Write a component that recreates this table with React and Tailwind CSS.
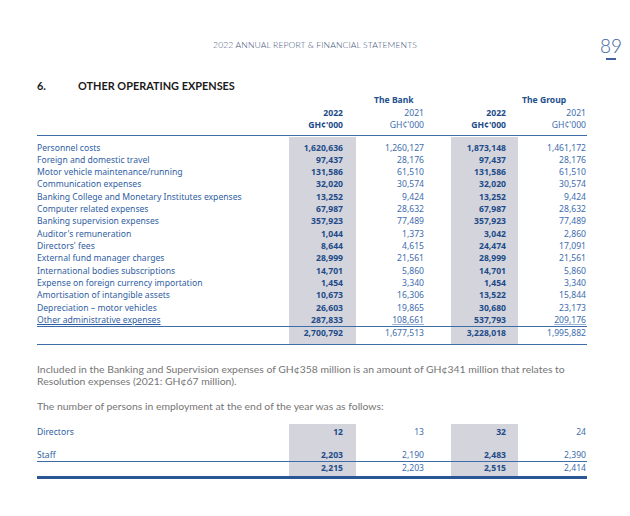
import React from 'react';

const ROWS = [
  ['Personnel costs', '1,620,636', '1,260,127', '1,873,148', '1,461,172'],
  ['Foreign and domestic travel', '97,437', '28,176', '97,437', '28,176'],
  ['Motor vehicle maintenance/running', '131,586', '61,510', '131,586', '61,510'],
  ['Communication expenses', '32,020', '30,574', '32,020', '30,574'],
  ['Banking College and Monetary Institutes expenses', '13,252', '9,424', '13,252', '9,424'],
  ['Computer related expenses', '67,987', '28,632', '67,987', '28,632'],
  ['Banking supervision expenses', '357,923', '77,489', '357,923', '77,489'],
  ["Auditor's remuneration", '1,044', '1,373', '3,042', '2,860'],
  ["Directors' fees", '8,644', '4,615', '24,474', '17,091'],
  ['External fund manager charges', '28,999', '21,561', '28,999', '21,561'],
  ['International bodies subscriptions', '14,701', '5,860', '14,701', '5,860'],
  ['Expense on foreign currency importation', '1,454', '3,340', '1,454', '3,340'],
  ['Amortisation of intangible assets', '10,673', '16,306', '13,522', '15,844'],
  ['Depreciation – motor vehicles', '26,603', '19,865', '30,680', '23,173'],
  ['Other administrative expenses', '287,833', '108,661', '537,793', '209,176'],
];

const GRID = 'grid grid-cols-[252px_67px_95px_67px_69px]';
const GRAY = 'bg-[#d4d4dc]';

function Row({ cells, underline, lead = 'leading-[12.33px]' }) {
  const [label, a, b, c, d] = cells;
  return (
    <div className={`${GRID} ${lead}`}>
      <div className="text-[#2f60a2]">
        <span className={underline ? 'underline decoration-[#2f60a2] underline-offset-[1px]' : ''}>{label}</span>
      </div>
      <div className={`${GRAY} text-right pr-[13px] font-bold text-[#204b88]`}>{a}</div>
      <div className="text-right pr-[27px] text-[#3d6cad]">
        <span className={underline ? 'underline decoration-[#9bb3d4] underline-offset-[1px]' : ''}>{b}</span>
      </div>
      <div className={`${GRAY} text-right pr-[12px] font-bold text-[#204b88]`}>{c}</div>
      <div className="text-right pr-[1px] text-[#3d6cad]">
        <span className={underline ? 'underline decoration-[#9bb3d4] underline-offset-[1px]' : ''}>{d}</span>
      </div>
    </div>
  );
}

function Spacer({ h }) {
  return (
    <div className={GRID}>
      <div className={h} />
      <div className={GRAY} />
      <div />
      <div className={GRAY} />
      <div />
    </div>
  );
}

export default function App() {
  return (
    <div className="w-[630px] h-[516px] bg-white overflow-hidden font-['Noto_Sans',sans-serif]">
      {/* page header */}
      <div className="h-[78px] pt-[36px] grid grid-cols-[1fr_auto_1fr] items-start">
        <div />
        <div className="mt-[2px] font-['Lato',sans-serif] font-light text-[8.6px] leading-[14px] text-[#44557a] tracking-[0.1px]">
          2022 ANNUAL REPORT &amp; FINANCIAL STATEMENTS
        </div>
        <div className="justify-self-end mr-[8px] flex flex-col items-center">
          <span className="font-['Lato',sans-serif] font-light text-[19px] leading-[19px] text-[#3e63a0]">89</span>
          <span className="mt-[3px] w-[10px] h-[1.5px] bg-[#3e63a0]" />
        </div>
      </div>

      <div className="ml-[37px] w-[550px]">
        {/* section title */}
        <div className="flex font-['Lato',sans-serif] font-bold text-[10.9px] leading-[16px] text-[#1a1a1a]">
          <span className="w-[41px]">6.</span>
          <span>OTHER OPERATING EXPENSES</span>
        </div>

        {/* column headers */}
        <div className="text-[8.6px] pb-[3px] border-b border-[#3d6ca6]">
          <div className={`${GRID} leading-[12.5px]`}>
            <div />
            <div />
            <div className="pl-[18px] font-bold text-[#24508d]">The Bank</div>
            <div />
            <div className="pl-[4px] font-bold text-[#24508d]">The Group</div>
          </div>
          <div className={`${GRID} leading-[12.5px]`}>
            <div />
            <div className="text-right pr-[13px] font-bold text-[#204b88]">2022</div>
            <div className="text-right pr-[27px] text-[#3d6cad]">2021</div>
            <div className="text-right pr-[12px] font-bold text-[#204b88]">2022</div>
            <div className="text-right pr-[1px] text-[#3d6cad]">2021</div>
          </div>
          <div className={`${GRID} leading-[12.5px]`}>
            <div />
            <div className="text-right pr-[13px] font-bold text-[#204b88]">GH¢'000</div>
            <div className="text-right pr-[27px] text-[#3d6cad]">GH¢'000</div>
            <div className="text-right pr-[12px] font-bold text-[#204b88]">GH¢'000</div>
            <div className="text-right pr-[1px] text-[#3d6cad]">GH¢'000</div>
          </div>
        </div>

        {/* body */}
        <div className="mt-[1.5px] text-[8.6px] border-b-[1.5px] border-[#3d6ca6]">
          <Spacer h="h-[4.5px]" />
          {ROWS.map((r, i) => (
            <Row key={r[0]} cells={r} underline={i === ROWS.length - 1} />
          ))}
          <div className="border-t border-[#3d6ca6]">
            <Row cells={['', '2,700,792', '1,677,513', '3,228,018', '1,995,882']} />
            <Spacer h="h-[4px]" />
          </div>
        </div>

        {/* notes */}
        <div className="font-['Lato',sans-serif] text-[10.4px] leading-[12.5px] text-[#757575]">
          <p className="mt-[18px] w-[548px]">
            Included in the Banking and Supervision expenses of GH¢358 million is an amount of GH¢341 million that relates to
            Resolution expenses (2021: GH¢67 million).
          </p>
          <p className="mt-[12px]">The number of persons in employment at the end of the year was as follows:</p>
        </div>

        {/* employees */}
        <div className="mt-[11.5px] text-[8.6px] border-b-[3px] border-[#2a5696]">
          <Spacer h="h-[2px]" />
          <Row cells={['Directors', '12', '13', '32', '24']} />
          <Spacer h="h-[10.5px]" />
          <Row cells={['Staff', '2,203', '2,190', '2,483', '2,390']} />
          <div className="border-t border-[#3d6ca6]">
            <Row cells={['', '2,215', '2,203', '2,515', '2,414']} />
            <Spacer h="h-[1.5px]" />
          </div>
        </div>
      </div>
    </div>
  );
}
